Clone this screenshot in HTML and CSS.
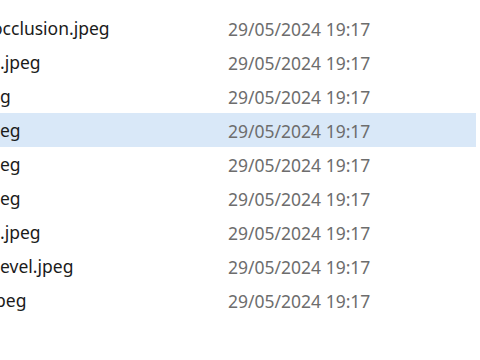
FILE: index.html
```html
<!DOCTYPE html>
<html lang="en">
<head>
<meta charset="utf-8">
<title>Files</title>
<link rel="stylesheet" href="styles.css">
</head>
<body>
<div class="list">
  <div class="row"><div class="name"><span class="clip-o">occlusion.jpeg</span></div><div class="date">29/05/2024 19:17</div></div>
  <div class="row"><div class="name">.jpeg</div><div class="date">29/05/2024 19:17</div></div>
  <div class="row"><div class="name">g</div><div class="date">29/05/2024 19:17</div></div>
  <div class="row selected"><div class="name">eg</div><div class="date">29/05/2024 19:17</div></div>
  <div class="row"><div class="name">eg</div><div class="date">29/05/2024 19:17</div></div>
  <div class="row"><div class="name">eg</div><div class="date">29/05/2024 19:17</div></div>
  <div class="row"><div class="name">.jpeg</div><div class="date">29/05/2024 19:17</div></div>
  <div class="row"><div class="name">evel.jpeg</div><div class="date">29/05/2024 19:17</div></div>
  <div class="row"><div class="name"><span class="clip-p">peg</span></div><div class="date">29/05/2024 19:17</div></div>
</div>
</body>
</html>
```
FILE: styles.css
```css
html, body {
  margin: 0;
  padding: 0;
  background: #ffffff;
  overflow: hidden;
}
body {
  width: 480px;
  height: 360px;
  font-family: "Noto Sans", "Open Sans", sans-serif;
  font-size: 17.5px;
}
.list {
  padding-top: 11px;
  display: flex;
  flex-direction: column;
}
.row {
  display: flex;
  align-items: center;
  height: 34px;
  width: 476px;
  white-space: nowrap;
}
.row.selected {
  background: #d9e8f8;
}
.name {
  width: 228px;
  flex: none;
  overflow: hidden;
  color: #1b1b1b;
}
.clip-o {
  display: inline-block;
  margin-left: -8px;
}
.clip-p {
  display: inline-block;
  margin-left: -5px;
}
.date {
  flex: none;
  color: #6d6d6d;
  padding-top: 2px;
}
```
